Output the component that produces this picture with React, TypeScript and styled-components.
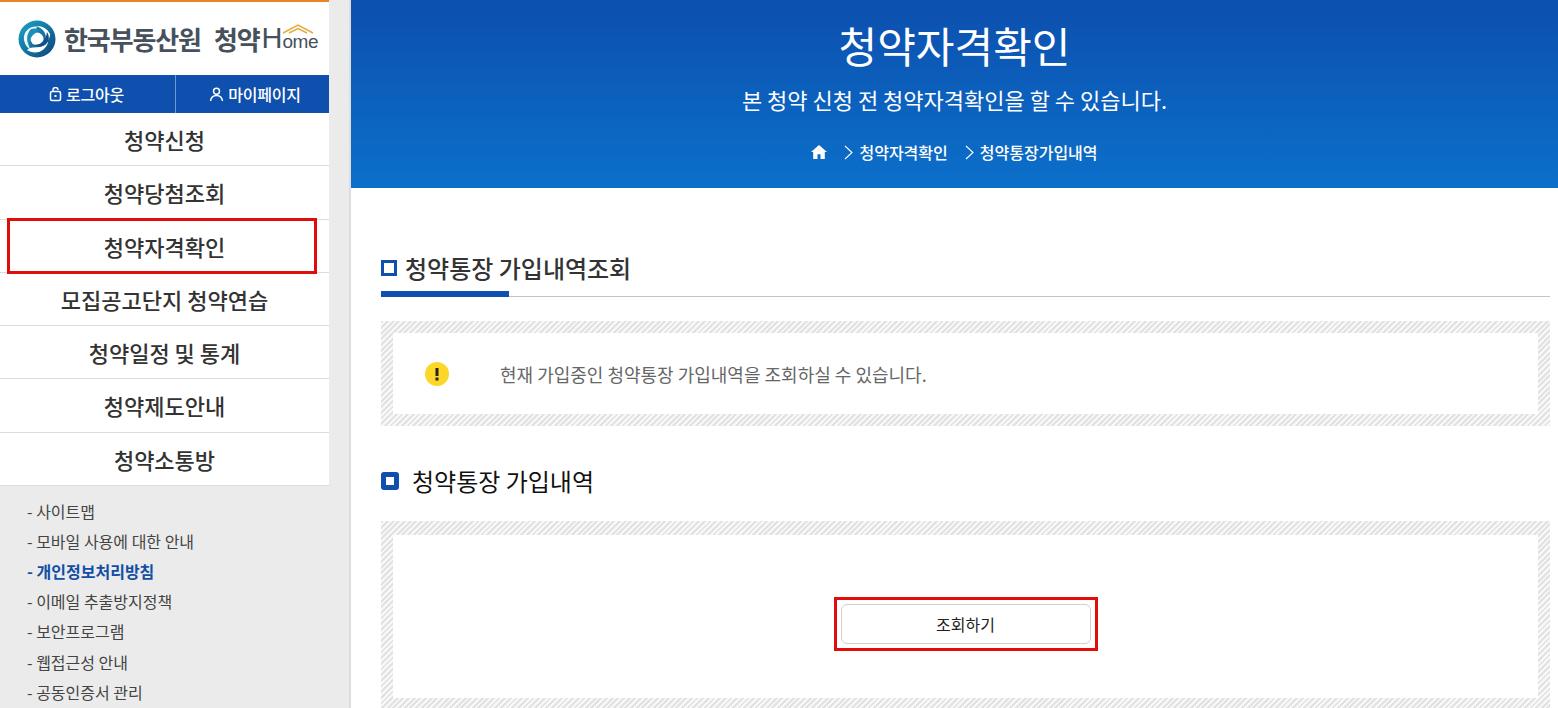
import React from "react";
import styled, { createGlobalStyle } from "styled-components";

const font = `"Noto Sans CJK KR", "Noto Sans", sans-serif`;

const Global = createGlobalStyle`
  html, body { margin: 0; padding: 0; height: 708px; overflow: hidden; background: #fff; }
  * { box-sizing: border-box; }
  body { font-family: ${font}; }
`;

const Page = styled.div`
  display: grid;
  grid-template-columns: 351px 1fr;
  height: 708px;
  overflow: hidden;
`;

const Sidebar = styled.aside`
  background: #ebebeb;
  border-right: 2px solid #dedede;
  height: 708px;
  overflow: hidden;
`;

const SideColumn = styled.div`
  width: 329px;
  background: #fff;
`;

const LogoBar = styled.div`
  height: 75px;
  border-top: 2px solid #e8832a;
  display: flex;
  align-items: center;
  padding-left: 18px;
  overflow: hidden;
  white-space: nowrap;
`;

const LogoName = styled.span`
  margin-left: 8px;
  font-size: 26px;
  font-weight: 700;
  letter-spacing: -1.1px;
  color: #46515c;
`;

const LogoService = styled.span`
  margin-left: 13px;
  font-size: 26px;
  font-weight: 700;
  letter-spacing: -1.1px;
  color: #46515c;
`;

const LogoHome = styled.span`
  position: relative;
  margin-left: 2px;
  font-family: "Liberation Sans", sans-serif;
  font-size: 29px;
  color: #46515c;
  display: inline-flex;
  align-items: baseline;
`;

const LogoOme = styled.span`
  font-size: 19px;
  letter-spacing: -0.5px;
`;

const LogoRoof = styled.svg`
  position: absolute;
  left: 20px;
  top: 2px;
`;

const AuthBar = styled.div`
  height: 38px;
  display: grid;
  grid-template-columns: 176px 153px;
  background: #0f4fae;
`;

const AuthLink = styled.a<{ $divider?: boolean }>`
  display: flex;
  align-items: center;
  justify-content: center;
  gap: 4px;
  color: #fff;
  font-size: 16px;
  font-weight: 500;
  letter-spacing: -0.2px;
  border-right: ${(p) => (p.$divider ? "1px solid #6f97d2" : "none")};
  padding: ${(p) => (p.$divider ? "0 2px 0 0" : "0 0 0 5px")};
`;

const NavList = styled.nav`
  display: flex;
  flex-direction: column;
`;

const NavItem = styled.a<{ $marked?: boolean }>`
  position: relative;
  display: flex;
  align-items: center;
  justify-content: center;
  height: 53.25px;
  border-bottom: 1px solid #dcdcdc;
  color: #333;
  font-size: 22px;
  font-weight: 500;
  letter-spacing: 0;
  white-space: nowrap;
  &::after {
    content: "";
    display: ${(p) => (p.$marked ? "block" : "none")};
    position: absolute;
    left: 7px;
    right: 12px;
    top: -2px;
    bottom: -2px;
    border: 3px solid #e00d0d;
  }
`;

const FooterList = styled.ul`
  list-style: none;
  margin: 0;
  padding: 10px 0 0 27px;
`;

const FooterItem = styled.li<{ $active?: boolean }>`
  height: 30.17px;
  line-height: 30px;
  font-size: 16px;
  white-space: nowrap;
  font-weight: ${(p) => (p.$active ? 700 : 400)};
  color: ${(p) => (p.$active ? "#134ea6" : "#444")};
`;

const Main = styled.main`
  min-width: 0;
`;

const Hero = styled.header`
  height: 188px;
  background: linear-gradient(180deg, #0d4fae 0%, #0b70ca 100%);
  color: #fff;
  display: flex;
  flex-direction: column;
  align-items: center;
  padding-top: 15px;
`;

const HeroTitle = styled.h1`
  margin: 0;
  font-size: 42px;
  line-height: 60px;
  font-weight: 400;
`;

const HeroSub = styled.p`
  margin: 0;
  font-size: 22px;
  line-height: 48px;
  font-weight: 400;
  margin-top: 0;
`;

const Crumbs = styled.div`
  display: flex;
  align-items: center;
  font-size: 16px;
  font-weight: 500;
  line-height: 24px;
  margin-top: 17px;
`;

const Crumb = styled.span`
  display: inline-flex;
  align-items: center;
  gap: 5px;
  margin-left: 16px;
`;

const Content = styled.div`
  padding: 0 8px 0 30px;
`;

const TitleRow = styled.div`
  margin-top: 60px;
  height: 49px;
  position: relative;
  display: flex;
  align-items: center;
  gap: 8px;
  border-bottom: 1px solid #c4c4c4;
  padding-bottom: 9px;
  &::after {
    content: "";
    position: absolute;
    left: 0;
    bottom: -1px;
    width: 128px;
    height: 6px;
    background: #0f4fae;
  }
`;

const TitleMark = styled.span`
  width: 16px;
  height: 16px;
  border: 3px solid #0f4fae;
  background: #fff;
`;

const Title = styled.h2`
  margin: 0;
  font-size: 24px;
  font-weight: 500;
  color: #333;
  line-height: 32px;
`;

const Hatched = styled.section<{ $h: number; $top: number; $b?: number }>`
  height: ${(p) => p.$h}px;
  margin-top: ${(p) => p.$top}px;
  padding: 12px;
  padding-top: ${(p) => (p.$b ? p.$b : 12)}px;
  background: repeating-linear-gradient(
    135deg,
    #e2e2e2 0,
    #e2e2e2 2px,
    #f8f8f8 2px,
    #f8f8f8 4px
  );
`;

const Inner = styled.div`
  height: 100%;
  background: #fff;
  display: flex;
  align-items: center;
`;

const NoticeIcon = styled.span`
  flex: none;
  margin-left: 32px;
  width: 24px;
  height: 24px;
  border-radius: 50%;
  background: #fdd628;
  display: flex;
  align-items: center;
  justify-content: center;
`;

const NoticeText = styled.p`
  margin: 0 0 0 51px;
  font-size: 18px;
  color: #666;
  line-height: 28px;
`;

const SubTitleRow = styled.div`
  margin-top: 39px;
  display: flex;
  align-items: center;
  gap: 13px;
  height: 32px;
`;

const SubMark = styled.span`
  width: 18px;
  height: 18px;
  border: 5px solid #0f4fae;
  border-radius: 3px;
  background: #fff;
`;

const SubTitle = styled.h3`
  margin: 0;
  font-size: 24px;
  font-weight: 400;
  color: #111;
  line-height: 32px;
`;

const ButtonFrame = styled.div`
  margin: 0 auto;
  position: relative;
  top: 0;
  padding: 4px;
  border: 3px solid #e00d0d;
  width: 264px;
  height: 54px;
  transform: translate(0, 7px);
`;

const SearchButton = styled.button`
  display: block;
  width: 100%;
  height: 100%;
  background: #fff;
  border: 1px solid #cfcfcf;
  border-radius: 6px;
  font-family: ${font};
  font-size: 16px;
  color: #222;
  padding: 0;
`;

const LogoSwirl = () => (
  <svg width="38" height="38" viewBox="0 0 38 38" aria-hidden="true">
    <defs>
      <linearGradient id="sw" x1="0" y1="0" x2="1" y2="1">
        <stop offset="0" stopColor="#1fa6c8" />
        <stop offset="0.55" stopColor="#12709f" />
        <stop offset="1" stopColor="#123f78" />
      </linearGradient>
    </defs>
    <circle cx="19" cy="19" r="18.5" fill="url(#sw)" />
    <path d="M19 6.5C11 6 5 12 6 20c1 5 3.5 8 7 10-3-4-3.500-9-.5-13 2-3 4.500-5 6.500-10.500z" fill="#fff" opacity="0.95" />
    <path d="M32 14c-3-6-9-8.500-14-7.500 4 .5 7.500 3 9 7 1.500 3.500 1 6-1 9 3.500-1.500 6.500-4.500 6-8.500z" fill="#fff" />
    <path d="M9 30c5 3.500 12 3.500 17-1 2.500-2.500 4-5 4-8-2 3.500-5 5.500-9 6-4.500.5-8.500 0-12 3z" fill="#fff" />
    <circle cx="19" cy="19" r="6.500" fill="#fff" />
    <path d="M13 9c-5 5-5 13-1 18-1-5 0-9 3-12 2-2 4-2.500 6-5-2.500-1.500-5.500-2-8-1z" fill="#1a8fb8" />
    <path d="M29 12c-1 6-2 8-6 11-2 1.500-5 2-8 1.500 5 3.500 10 3 14-1.500 2.500-3.500 2.500-7.500 0-11z" fill="#144f8c" />
  </svg>
);

const LockIcon = () => (
  <svg width="13" height="15" viewBox="0 0 13 15" fill="none" stroke="#fff" strokeWidth="1.5" aria-hidden="true">
    <rect x="1.500" y="4.500" width="10" height="9" rx="1.500" />
    <path d="M4 4.500V3a2.500 2.500 0 0 1 5 0" />
    <rect x="5.500" y="8" width="2" height="2" fill="#fff" stroke="none" />
  </svg>
);

const UserIcon = () => (
  <svg width="15" height="15" viewBox="0 0 15 15" fill="none" stroke="#fff" strokeWidth="1.500" aria-hidden="true">
    <circle cx="7.500" cy="4.300" r="3" />
    <path d="M1.500 14c.5-3.500 3-5.500 6-5.500s5.500 2 6 5.500" />
  </svg>
);

const HomeIcon = () => (
  <svg width="16" height="14" viewBox="0 0 16 14" fill="#fff" aria-hidden="true">
    <path d="M8 0 0 7h2.200v7h4.300V9.200h3V14h4.300V7H16z" />
  </svg>
);

const Chevron = () => (
  <svg width="11" height="15" viewBox="0 0 11 15" fill="none" stroke="#fff" strokeWidth="1.100" aria-hidden="true">
    <path d="M2 1l7 6.500L2 14" />
  </svg>
);

const menu = ["청약신청", "청약당첨조회", "청약자격확인", "모집공고단지 청약연습", "청약일정 및 통계", "청약제도안내", "청약소통방"];
const links = ["사이트맵", "모바일 사용에 대한 안내", "개인정보처리방침", "이메일 추출방지정책", "보안프로그램", "웹접근성 안내", "공동인증서 관리"];

export default function App() {
  return (
    <>
      <Global />
      <Page>
        <Sidebar>
          <SideColumn>
            <LogoBar>
              <LogoSwirl />
              <LogoName>한국부동산원</LogoName>
              <LogoService>청약</LogoService>
              <LogoHome>
                H
                <LogoOme>ome</LogoOme>
                <LogoRoof width="32" height="10" viewBox="0 0 32 10" fill="none" stroke="#e8a93a" strokeWidth="1.500">
                  <path d="M1 9 16 1l15 8" />
                  <path d="M7 9l9-4.500L25 9" />
                </LogoRoof>
              </LogoHome>
            </LogoBar>
            <AuthBar>
              <AuthLink $divider>
                <LockIcon />
                로그아웃
              </AuthLink>
              <AuthLink>
                <UserIcon />
                마이페이지
              </AuthLink>
            </AuthBar>
            <NavList>
              {menu.map((m, i) => (
                <NavItem key={m} $marked={i === 2}>
                  {m}
                </NavItem>
              ))}
            </NavList>
          </SideColumn>
          <FooterList>
            {links.map((l, i) => (
              <FooterItem key={l} $active={i === 2}>
                - {l}
              </FooterItem>
            ))}
          </FooterList>
        </Sidebar>
        <Main>
          <Hero>
            <HeroTitle>청약자격확인</HeroTitle>
            <HeroSub>본 청약 신청 전 청약자격확인을 할 수 있습니다.</HeroSub>
            <Crumbs>
              <HomeIcon />
              <Crumb>
                <Chevron />
                청약자격확인
              </Crumb>
              <Crumb>
                <Chevron />
                청약통장가입내역
              </Crumb>
            </Crumbs>
          </Hero>
          <Content>
            <TitleRow>
              <TitleMark />
              <Title>청약통장 가입내역조회</Title>
            </TitleRow>
            <Hatched $h={105} $top={24}>
              <Inner>
                <NoticeIcon>
                  <svg width="6" height="14" viewBox="0 0 6 14" fill="#222" aria-hidden="true">
                    <rect x="1.500" y="1" width="3" height="8" />
                    <rect x="1.500" y="10.500" width="3" height="3" />
                  </svg>
                </NoticeIcon>
                <NoticeText>현재 가입중인 청약통장 가입내역을 조회하실 수 있습니다.</NoticeText>
              </Inner>
            </Hatched>
            <SubTitleRow>
              <SubMark />
              <SubTitle>청약통장 가입내역</SubTitle>
            </SubTitleRow>
            <Hatched $h={189} $top={24} $b={14}>
              <Inner>
                <ButtonFrame>
                  <SearchButton>조회하기</SearchButton>
                </ButtonFrame>
              </Inner>
            </Hatched>
          </Content>
        </Main>
      </Page>
    </>
  );
}
